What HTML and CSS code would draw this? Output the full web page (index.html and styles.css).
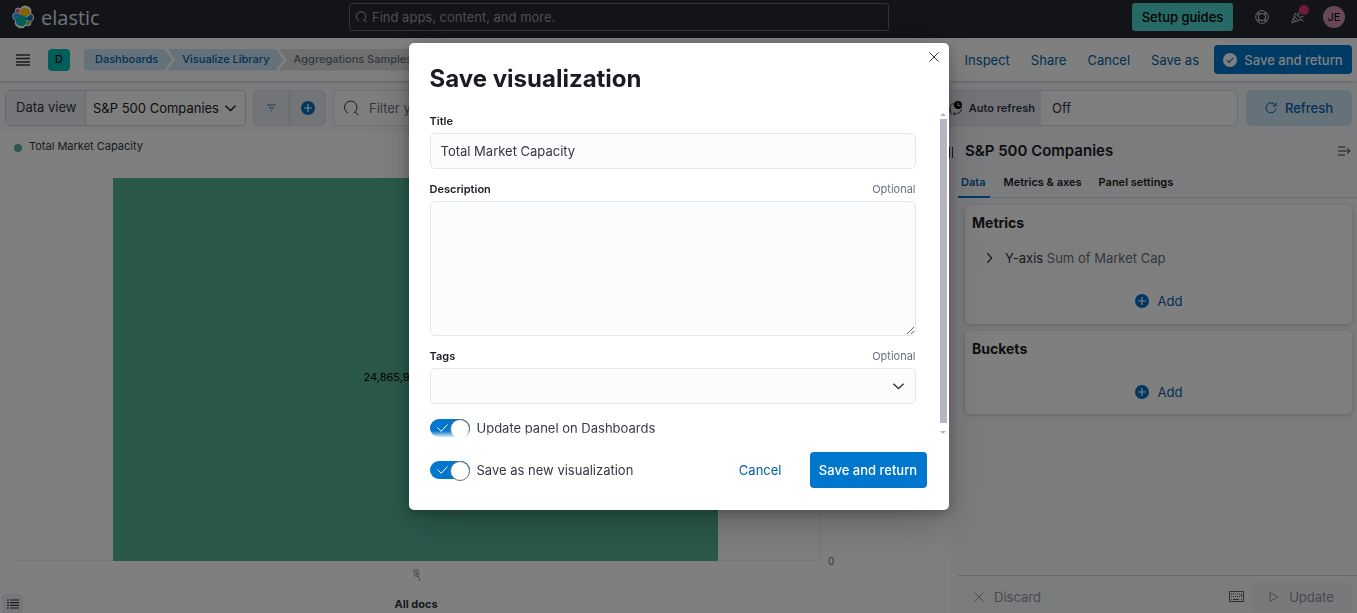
FILE: index.html
```html
<!DOCTYPE html>
<html lang="en">
<head>
<meta charset="utf-8">
<meta name="viewport" content="width=device-width, initial-scale=1">
<title>Aggregations Samples - Elastic</title>
<link rel="stylesheet" href="styles.css">
</head>
<body>
<div class="app">
  <header class="topbar">
    <a class="brand" href="#">
      <svg class="brand-mark" viewBox="0 0 32 32" aria-hidden="true">
        <path fill="#fff" d="M32 16.8c0-2.600-1.600-4.900-4.100-5.800A8.900 8.900 0 0 0 11.900 3.700 4.700 4.700 0 0 0 4.400 9C2 9.900.300 12.300.300 14.900c0 2.700 1.700 5 4.200 5.900A8.900 8.900 0 0 0 20.500 28.200a4.700 4.700 0 0 0 7.400-5.400C30.400 21.900 32 19.500 32 16.800"/>
        <path fill="#FEC514" d="m12.600 13.800 7 3.200 7-6.200A7.900 7.900 0 0 0 11.700 6.900l-1.200 6z"/>
        <path fill="#00BFB3" d="M5.500 20.900a7.900 7.900 0 0 0 14.900 4.100l1.200-6.100-1.600-3-7-3.200-7.300 6.300z"/>
        <path fill="#F04E98" d="m5.400 9.100 4.800 1.100 1-5.400A3.800 3.800 0 0 0 5.400 9.100"/>
        <path fill="#1BA9F5" d="M5 10.200a5.300 5.300 0 0 0-.2 9.800l6.700-6.100-1.200-2.600z"/>
        <path fill="#93C90E" d="M20.900 27a3.800 3.800 0 0 0 5.800-4.300l-4.800-1.100z"/>
        <path fill="#0077CC" d="m21.800 20.500 5.300 1.200a5.300 5.300 0 0 0 .2-9.800l-6.900 6z"/>
      </svg>
      <span class="brand-name">elastic</span>
    </a>
    <label class="global-search">
      <svg class="i12" viewBox="0 0 16 16" aria-hidden="true"><path class="ln" d="M4 13a6.300 6.300 0 1 1 5.500 0M11.500 12l2.500 3"/></svg>
      <input type="text" aria-label="Search Elastic" placeholder="Find apps, content, and more.">
    </label>
    <div class="top-actions">
      <button class="setup" type="button">Setup guides</button>
      <button class="top-icon help" type="button" aria-label="Help">
        <svg viewBox="0 0 16 16"><circle class="ln" cx="8" cy="8" r="7.200"/><circle class="ln" cx="8" cy="8" r="4.200"/><path class="ln" d="M2.200 3.900l2.700 1.500M3.900 2.200l1.500 2.700M13.800 3.900l-2.700 1.500M12.100 2.200l-1.500 2.700M2.200 12.100l2.700-1.500M3.900 13.800l1.500-2.700M13.800 12.100l-2.700-1.500M12.100 13.800l-1.500-2.700"/></svg>
      </button>
      <button class="top-icon news" type="button" aria-label="News">
        <svg viewBox="0 0 16 16"><path class="ln" d="M5 3.500 1 14.500l11-3.600zM3.800 7l4.800 5M2.700 10l3.200 3.200M8 6.500c1-1 1.200-2.800.500-4.500M10 8.500c1.500-1.500 3-1.500 4.500-.5M12 12c1-.5 2 0 2.600 1.500"/></svg>
        <span class="dot"></span>
      </button>
      <button class="avatar" type="button" aria-label="Account">JE</button>
    </div>
  </header>

  <div class="navbar">
    <button class="menu" type="button" aria-label="Menu"><svg viewBox="0 0 14 12"><path d="M0 1h14M0 4.500h14M0 8h14M0 11h14"/></svg></button>
    <a class="space" href="#">D</a>
    <nav class="crumbs" aria-label="Breadcrumbs">
      <a class="crumb first" href="#">Dashboards</a>
      <a class="crumb" href="#">Visualize Library</a>
      <span class="crumb last">Aggregations Samples</span>
    </nav>
    <div class="nav-links">
      <a href="#">Inspect</a><a href="#">Share</a><a href="#">Cancel</a><a href="#">Save as</a>
    </div>
    <button class="primary nav-save" type="button">
      <svg viewBox="0 0 16 16" aria-hidden="true"><circle cx="8" cy="8" r="8" fill="#fff"/><path d="m4.500 8.200 2.500 2.500 4.600-5" fill="none" stroke="#0077cc" stroke-width="1.300"/></svg>
      Save and return
    </button>
  </div>

  <div class="querybar">
    <div class="dataview">
      <span class="dv-label">Data view</span>
      <button class="dv-button" type="button">S&amp;P 500 Companies
        <svg viewBox="0 0 14 14" aria-hidden="true"><path class="ln bold" d="m1.500 4.500 5.500 5.300 5.500-5.300"/></svg>
      </button>
    </div>
    <div class="filters">
      <button type="button" aria-label="Filters"><svg class="i10" viewBox="0 0 10 10"><path d="M0 2h9M2 5h5M4 8h1" stroke="#2b7fb8" stroke-width="1.200"/></svg></button>
      <button type="button" aria-label="Add filter"><svg class="i14" viewBox="0 0 14 14"><circle cx="7" cy="7" r="7" fill="#0071c2"/><path d="M3 7h8M7 3v8" stroke="#fff" stroke-width="1.200"/></svg></button>
    </div>
    <label class="kql">
      <svg class="i16" viewBox="0 0 16 16" aria-hidden="true"><path class="ln" d="M4 13a6.300 6.300 0 1 1 5.500 0M11.500 12l2.800 3.300"/></svg>
      <input type="text" aria-label="Query" placeholder="Filter your data using KQL syntax">
    </label>
    <div class="auto">
      <label class="auto-label" for="auto">
        <svg class="i14" viewBox="0 0 14 14" aria-hidden="true"><path class="ln" d="M1 8.500a5.500 5.500 0 0 1 4-6M1 8.500v3M3 13.500c-1.500-1-2-3-1-5M4 13c5 .5 8-2 8.500-5M4 13l2-2M4 13l1.500 1"/><circle cx="9" cy="4" r="4"/><path d="M9 1.500V4.500h2.500" fill="none" stroke="#e9edf3"/></svg>
        Auto refresh
      </label>
      <input id="auto" type="text" value="Off">
    </div>
    <button class="refresh" type="button">
      <svg class="i12" viewBox="0 0 12 12" aria-hidden="true"><path class="ln" d="M10 2.800A5 5 0 1 0 11 6.500M11.200.5v3.400H7.800"/></svg>
      Refresh
    </button>
  </div>

  <main class="work">
    <section class="viz" aria-label="Chart">
      <div class="legend"><span class="swatch"></span>Total Market Capacity</div>
      <div class="chart">
        <div class="plot"><div class="bar"><span>24,865,9</span></div></div>
        <div class="y-axis">0</div>
      </div>
      <div class="x-axis"><span class="tick">_all</span><strong>All docs</strong></div>
      <button class="legend-toggle" type="button" aria-label="Toggle legend"><svg viewBox="0 0 12 10"><path d="M0 1h2M3 1h9M0 3.700h2M3 3.700h9M0 6.300h2M3 6.300h9M0 9h2M3 9h9"/></svg></button>
    </section>
    <aside class="sidebar">
      <span class="resizer"></span>
      <div class="side-head">
        <h2>S&amp;P 500 Companies</h2>
        <button type="button" aria-label="Collapse"><svg viewBox="0 0 14 10"><path class="ln" d="M1 1h7M1 5h12M1 9h7M10 2l3 3-3 3"/></svg></button>
      </div>
      <div class="tabs" role="tablist">
        <button class="tab on" role="tab" type="button">Data</button>
        <button class="tab" role="tab" type="button">Metrics &amp; axes</button>
        <button class="tab" role="tab" type="button">Panel settings</button>
      </div>
      <div class="cards">
        <section class="card">
          <h3>Metrics</h3>
          <button class="agg" type="button">
            <svg viewBox="0 0 8 14" aria-hidden="true"><path class="ln bold" d="m1.500 1.500 5 5.500-5 5.500"/></svg>
            <span>Y-axis <em>Sum of Market Cap</em></span>
          </button>
          <button class="add" type="button"><svg class="i14" viewBox="0 0 14 14" aria-hidden="true"><circle cx="7" cy="7" r="7" fill="#0071c2"/><path d="M3 7h8M7 3v8" stroke="#fff" stroke-width="1.200"/></svg>Add</button>
        </section>
        <section class="card">
          <h3>Buckets</h3>
          <button class="add" type="button"><svg class="i14" viewBox="0 0 14 14" aria-hidden="true"><circle cx="7" cy="7" r="7" fill="#0071c2"/><path d="M3 7h8M7 3v8" stroke="#fff" stroke-width="1.200"/></svg>Add</button>
        </section>
      </div>
      <div class="side-foot">
        <button class="discard" type="button"><svg class="i10" viewBox="0 0 10 10" aria-hidden="true"><path class="ln" d="m.500.500 9 9M9.500.500l-9 9"/></svg>Discard</button>
        <svg class="keyboard" viewBox="0 0 15 11" aria-hidden="true"><path d="M.5.5h14v10H.5z" fill="none" stroke="#5a5e68"/><path d="M2 3h11M2 5.500h11" stroke="#5a5e68" stroke-dasharray="1 1"/><path d="M2 8.500h1M4 8.500h6M12 8.500h1M12.500 3v3" stroke="#5a5e68"/></svg>
        <button class="update" type="button" disabled><svg class="i10" viewBox="0 0 10 10" aria-hidden="true"><path class="ln" d="M1 .6 9 5 1 9.400z"/></svg>Update</button>
      </div>
    </aside>
  </main>
</div>

<div class="overlay">
  <form class="modal" role="dialog" aria-labelledby="modal-title">
    <button class="close" type="button" aria-label="Close"><svg class="i10" viewBox="0 0 10 10"><path class="ln" d="m.500.500 9 9M9.500.500l-9 9"/></svg></button>
    <h1 id="modal-title">Save visualization</h1>
    <div class="modal-body">
      <div class="fields">
        <div class="field">
          <div class="field-head"><label for="title">Title</label></div>
          <input id="title" type="text" value="Total Market Capacity">
        </div>
        <div class="field">
          <div class="field-head"><label for="desc">Description</label><span>Optional</span></div>
          <textarea id="desc"></textarea>
        </div>
        <div class="field">
          <div class="field-head"><label for="tags">Tags</label><span>Optional</span></div>
          <div class="select-wrap">
            <select id="tags"><option></option></select>
            <svg viewBox="0 0 14 14" aria-hidden="true"><path class="ln bold" d="m1.500 4.500 5.500 5.300 5.500-5.300"/></svg>
          </div>
        </div>
        <label class="switch">
          <span class="track"><input type="checkbox" checked><svg viewBox="0 0 11 8" aria-hidden="true"><path d="m.500 3.500 3.700 3.800L10.500.500"/></svg></span>
          Update panel on Dashboards
        </label>
      </div>
      <div class="scrollbar" aria-hidden="true"><i class="up"></i><i class="thumb"></i><i class="down"></i></div>
    </div>
    <div class="modal-foot">
      <label class="switch">
        <span class="track"><input type="checkbox" checked><svg viewBox="0 0 11 8" aria-hidden="true"><path d="m.500 3.500 3.700 3.800L10.500.500"/></svg></span>
        Save as new visualization
      </label>
      <button class="cancel" type="button">Cancel</button>
      <button class="primary" type="submit">Save and return</button>
    </div>
  </form>
</div>
</body>
</html>
```

FILE: styles.css
```css
* { box-sizing: border-box; }
body {
  margin: 0;
  font-family: Inter, "Liberation Sans", sans-serif;
  font-size: 13px;
  line-height: 20px;
  color: #343741;
  background: #fff;
}
button, input, textarea, select { font: inherit; color: inherit; margin: 0; }
button { border: 0; padding: 0; background: none; cursor: pointer; }
a { color: #0061a6; text-decoration: none; }
h1, h2, h3 { margin: 0; color: #1a1c21; }
svg { display: block; flex: none; overflow: visible; }
.ln { fill: none; stroke: currentColor; stroke-width: 1; }
.bold { stroke-width: 1.5; }
.i10 { width: 10px; height: 10px; }
.i12 { width: 12px; height: 12px; }
.i14 { width: 14px; height: 14px; }
.i16 { width: 16px; height: 16px; }

.app { display: flex; flex-direction: column; height: 100vh; overflow: hidden; }

.topbar { display: flex; align-items: flex-start; height: 38px; flex: none; background: #25282f; color: #dfe5ef; }
.brand { display: flex; gap: 7px; width: 349px; padding: 6px 0 0 12px; flex: none; color: #fff; }
.brand-mark { width: 22px; height: 22px; }
.brand-name { font-family: "Open Sans", sans-serif; font-size: 20px; line-height: 24px; color: #dfe5ef; }
.global-search {
  display: flex; align-items: center; gap: 4px; flex: 0 1 540px; height: 28px;
  margin-top: 3px; padding: 0 6px; border: 1px solid #62666f; border-radius: 3px;
}
.global-search input { flex: 1; min-width: 0; padding: 0; border: 0; outline: 0; background: none; }
.global-search input::placeholder { color: #989ca5; opacity: 1; }
.top-actions { display: flex; align-items: center; margin: 3px 12px 0 auto; height: 28px; }
.setup { width: 101px; height: 28px; margin-right: 22px; border-radius: 3px; background: #4dd2ca; color: #000; font-weight: 500; }
.top-icon { position: relative; width: 14px; height: 14px; margin-right: 22px; }
.top-icon.news { margin-right: 18px; }
.top-icon .dot { position: absolute; top: -5px; right: -4px; width: 10px; height: 10px; border-radius: 50%; background: #dd3472; }
.avatar { width: 22px; height: 22px; border-radius: 50%; background: #d18fb0; color: #000; font-size: 11px; }

.navbar { display: flex; align-items: center; height: 43px; flex: none; padding: 0 5px 0 16px; background: #fff; box-shadow: 0 1px 3px #0003; position: relative; }
.menu svg { width: 14px; height: 12px; fill: none; stroke: #343741; stroke-width: 1.4; }
.space { width: 22px; height: 22px; margin: 0 14px 0 18px; border-radius: 4px; background: #00bfb3; color: #000; font-size: 11px; font-weight: 500; line-height: 21px; text-align: center; }
.crumbs { display: flex; font-size: 11px; font-weight: 500; line-height: 21px; white-space: nowrap; }
.crumb { height: 22px; margin-right: -5px; padding: 0 14px 0 15px; background: #cce4f5; clip-path: polygon(0 0, calc(100% - 8px) 0, 100% 50%, calc(100% - 8px) 100%, 0 100%, 8px 50%); }
.crumb.first { padding-left: 11px; border-radius: 4px 0 0 4px; clip-path: polygon(0 0, calc(100% - 8px) 0, 100% 50%, calc(100% - 8px) 100%, 0 100%); }
.crumb.last { background: #e0e0e0; color: #69707d; }
.nav-links { display: flex; gap: 21px; margin: 0 15px 0 auto; }
.primary { background: #0077cc; color: #fff; font-weight: 500; border-radius: 4px; white-space: nowrap; }
.nav-save { display: flex; align-items: center; justify-content: center; gap: 7px; width: 138px; height: 29px; }
.nav-save svg { width: 14px; height: 14px; }

.querybar { display: flex; gap: 7px; flex: none; padding: 9px 5px 8px; background: #f7f8fc; }
.dataview { display: flex; width: 241px; height: 36px; flex: none; border: 1px solid #cbd0da; border-radius: 5px; overflow: hidden; line-height: 34px; background: #fbfcfd; }
.dv-label { width: 80px; padding-left: 10px; border-right: 1px solid #cbd0da; background: #e9edf3; line-height: 32px; }
.dv-button { display: flex; flex: 1; align-items: center; justify-content: space-between; padding: 0 8px 0 7px; color: #1a1c21; }
.dv-button svg { width: 13px; height: 14px; }
.filters { display: flex; width: 73px; flex: none; border-radius: 5px; border: 1px solid #d8dde7; background: #e4e8f1; }
.filters button { flex: 1; display: grid; place-items: center; }
.filters button + button { border-left: 1px solid #cbd0da; }
.kql { display: flex; align-items: center; gap: 9px; flex: 1; min-width: 0; padding: 0 10px; border: 1px solid #d9dee7; border-radius: 5px; background: #fbfcfd; }
.kql input { flex: 1; min-width: 0; padding: 0; border: 0; background: none; }
.kql input::placeholder { color: #69707d; opacity: 1; }
.auto { display: flex; width: 298px; flex: none; border: 1px solid #d3d9e3; border-radius: 5px; overflow: hidden; background: #fbfcfd; }
.auto-label { display: flex; flex: none; align-items: center; justify-content: flex-end; gap: 6px; width: 100px; padding-right: 6px; background: #e4e8f1; font-size: 11px; font-weight: 600; white-space: nowrap; }
.auto input { flex: 1; min-width: 0; padding: 0 11px; border: 0; background: none; }
.refresh { display: flex; align-items: center; justify-content: center; gap: 8px; width: 106px; margin-left: 1px; border-radius: 5px; background: #cce4f5; color: #0061a6; font-weight: 500; }

.work { display: flex; flex: 1; min-height: 0; }
.viz { position: relative; display: flex; flex-direction: column; flex: 1; min-width: 0; }
.legend { display: flex; align-items: center; gap: 7px; height: 24px; padding-left: 14px; font-size: 11px; }
.swatch { width: 8px; height: 8px; margin-top: 3px; border-radius: 50%; background: #54b399; }
.chart { display: flex; flex: 1; min-height: 0; margin: 20px 0 0 12px; }
.plot { display: flex; flex: 1; justify-content: center; border-right: 1px solid #eaedf3; border-bottom: 1px solid #eaedf3; }
.bar { display: flex; align-items: center; justify-content: center; width: 75%; margin-bottom: -1px; background: #54b399; color: #000; font-size: 11px; }
.bar span { width: 104px; margin-top: 14px; }
.y-axis { display: flex; align-items: flex-end; width: 131px; padding-left: 8px; font-size: 10px; color: #69707d; margin-bottom: -10px; }
.x-axis { display: flex; flex-direction: column; align-items: center; justify-content: space-between; height: 52px; padding: 8px 131px 0 12px; font-size: 11px; line-height: 18px; }
.tick { writing-mode: vertical-rl; transform: rotate(180deg); font-size: 8px; line-height: 10px; color: #69707d; }
.legend-toggle { position: absolute; left: 2px; bottom: 0; width: 21px; height: 19px; display: grid; place-items: center; border-radius: 4px 4px 0 0; background: #edeff5; }
.legend-toggle svg { width: 12px; height: 10px; stroke: #343741; stroke-width: 1.2; }

.sidebar { position: relative; display: flex; flex-direction: column; width: 406px; flex: none; padding-left: 7px; background: #f7f8fc; }
.resizer { position: absolute; left: -2px; top: 13px; width: 4px; height: 11px; border: solid #343741; border-width: 0 1px; }
.side-head { display: flex; align-items: center; justify-content: space-between; height: 33px; padding: 1px 6px 0 7px; }
.side-head h2 { font-size: 15px; font-weight: 600; }
.side-head svg { width: 14px; height: 10px; }
.tabs { display: flex; gap: 11px; height: 31px; border-bottom: 1px solid #d3dae6; }
.tab { padding: 0 3px 1px; height: 31px; font-size: 11px; font-weight: 600; color: #1a1c21; }
.tab.on { padding: 0 4px 0 3px; color: #0061a6; border-bottom: 2px solid #0077cc; }
.cards { display: flex; flex-direction: column; gap: 7px; padding: 7px 5px 0 7px; }
.card { display: flex; flex-direction: column; padding: 8px 7px; border-radius: 5px; background: #fff; box-shadow: 0 1px 5px #0003; }
.card h3 { font-size: 14px; line-height: 20px; }
.agg { display: flex; align-items: center; gap: 12px; height: 36px; margin-top: 7px; padding: 0 14px; border-radius: 5px; background: #fcfcfc; }
.agg svg { width: 7px; height: 12px; }
.agg em { font-style: normal; color: #69707d; }
.add { display: flex; align-items: center; justify-content: center; gap: 9px; height: 28px; margin-top: 19px; color: #0061a6; }
.agg + .add { margin: 11px 0 1px; }
.side-foot { display: flex; align-items: center; height: 38px; margin-top: auto; padding: 4px 5px 0 16px; border-top: 1px solid #c9d0dc; color: #8f95a1; }
.discard { display: flex; align-items: center; gap: 10px; }
.keyboard { width: 15px; height: 11px; margin: 0 7px 0 auto; }
.update { display: flex; align-items: center; justify-content: center; gap: 10px; width: 101px; height: 29px; border-radius: 4px; background: #f1f3f7; }

.overlay { position: fixed; inset: 0; display: flex; align-items: center; justify-content: center; padding-bottom: 60px; background: rgba(0, 0, 0, .5); }
.modal {
  position: relative; width: 540px; max-width: calc(100vw - 32px); padding-bottom: 22px; border-radius: 5px; background: #fff;
  box-shadow: 0 3px 12px #0004, 0 16px 40px #0003;
}
.close { position: absolute; top: 3px; right: 4px; width: 22px; height: 22px; display: grid; place-items: center; }
.modal h1 { padding: 20px 21px 13px; font-size: 24px; line-height: 32px; font-weight: 700; }
.modal-body { display: flex; height: 329px; }
.fields {
  display: flex; flex-direction: column; flex: 1; gap: 12px; padding: 5px 24px 0 21px;
  -webkit-mask-image: linear-gradient(to bottom, #000 calc(100% - 6px), #0002);
  mask-image: linear-gradient(to bottom, #000 calc(100% - 6px), #0002);
}
.field { display: flex; flex-direction: column; gap: 4px; }
.field-head { display: flex; justify-content: space-between; font-size: 11px; line-height: 16px; }
.field-head label { font-weight: 600; color: #1a1c21; }
.field-head span { color: #69707d; }
.field input, .field textarea, .field select { width: 100%; height: 36px; padding: 0 10px; border: 1px solid #e3e6eb; border-radius: 5px; background: #fbfcfd; }
.field textarea { display: block; height: 135px; padding: 8px 10px; resize: vertical; }
.select-wrap { position: relative; }
.field select { display: block; appearance: none; }
.select-wrap svg { position: absolute; right: 11px; top: 11px; width: 13px; height: 14px; pointer-events: none; }
.switch { display: flex; align-items: center; gap: 7px; }
.fields .switch { margin-top: 2px; }
.track { position: relative; width: 40px; height: 18px; }
.track input { appearance: none; display: block; width: 40px; height: 18px; border-radius: 9px; background: #69707d; }
.track input:checked { background: #0077cc; }
.track input::after { content: ""; display: block; width: 18px; height: 18px; border: 1px solid #69707d; border-radius: 50%; background: #fff; }
.track input:checked::after { margin-left: auto; }
.track svg { position: absolute; left: 7px; top: 5px; width: 11px; height: 8px; fill: none; stroke: #fff; stroke-width: 1; }
.scrollbar { display: flex; flex-direction: column; align-items: center; width: 7px; margin-right: 2px; padding: 5px 0 3px; }
.scrollbar .thumb { flex: 1; width: 7px; margin: 3px 0 8px; background: #b4b7c1; }
.up, .down { border: 3px solid transparent; }
.up { border-top: 0; border-bottom-color: #b4b7c1; }
.down { border-bottom: 0; border-top-color: #b4b7c1; }
.modal-foot { display: flex; align-items: center; height: 51px; padding: 15px 22px 0 21px; }
.modal-foot .cancel { margin: 0 28px 0 auto; color: #0061a6; }
.modal-foot .primary { width: 117px; height: 36px; flex: none; }
```
